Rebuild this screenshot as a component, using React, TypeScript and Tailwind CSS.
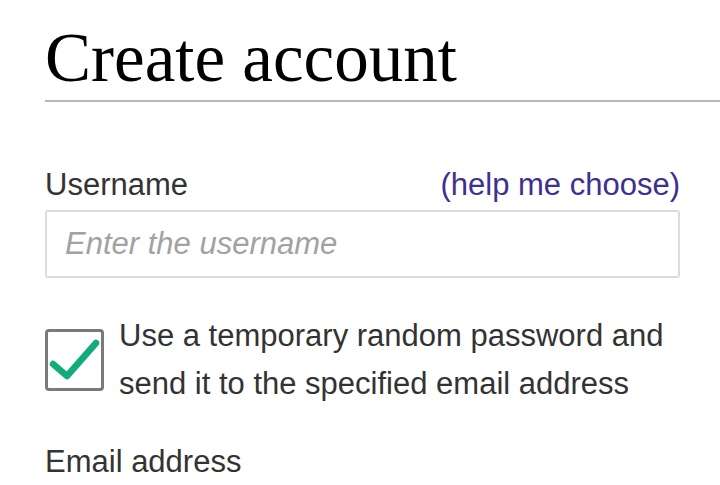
import { useState } from "react";

const sans = "font-['Liberation_Sans',Arial,sans-serif]";

const App = () => {
  const [checked, setChecked] = useState(true);

  return (
    <div className="min-h-[485px] w-[720px] overflow-hidden bg-white pl-[45px] text-[#222222]">
      {/* Heading */}
      <h1 className="mt-[24px] border-b-2 border-[#b4b8bd] pb-[7px] font-['Liberation_Serif','Times_New_Roman',serif] text-[69px] leading-[69px] text-black">
        Create account
      </h1>

      <form className={`w-[635px] ${sans} text-[31px]`}>
        {/* Username */}
        <div className="mt-[65px] flex items-center justify-between leading-[36px]">
          <label htmlFor="username" className="text-[#333333]">
            Username
          </label>
          <a href="#" className="text-[#3d3090]">
            (help me choose)
          </a>
        </div>
        <input
          id="username"
          type="text"
          placeholder="Enter the username"
          className="mt-[7px] block h-[68px] w-full rounded-[3px] border-2 border-[#dadcdf] px-[18px] text-[31px] outline-none placeholder:italic placeholder:text-[#a2a2a2]"
        />

        {/* Temporary password */}
        <label className="mt-[34px] flex cursor-pointer items-center gap-[15px] leading-[48px]">
          <span
            onClick={() => setChecked(!checked)}
            className="flex h-[62px] w-[59px] shrink-0 items-center justify-center rounded-[4px] border-[3px] border-[#777a7e]"
          >
            {checked && (
              <svg width="53" height="56" viewBox="0 0 53 56" fill="none">
                <path
                  d="M5 32 L19 44 L48 11"
                  stroke="#13ab7c"
                  strokeWidth="6.5"
                  strokeLinecap="round"
                  strokeLinejoin="round"
                />
              </svg>
            )}
          </span>
          <span className="text-[#333333]">
            Use a temporary random password and
            <br />
            send it to the specified email address
          </span>
        </label>

        {/* Email */}
        <div className="mt-[36px] leading-[36px] text-[#333333]">Email address</div>
      </form>
    </div>
  );
};

export default App;
